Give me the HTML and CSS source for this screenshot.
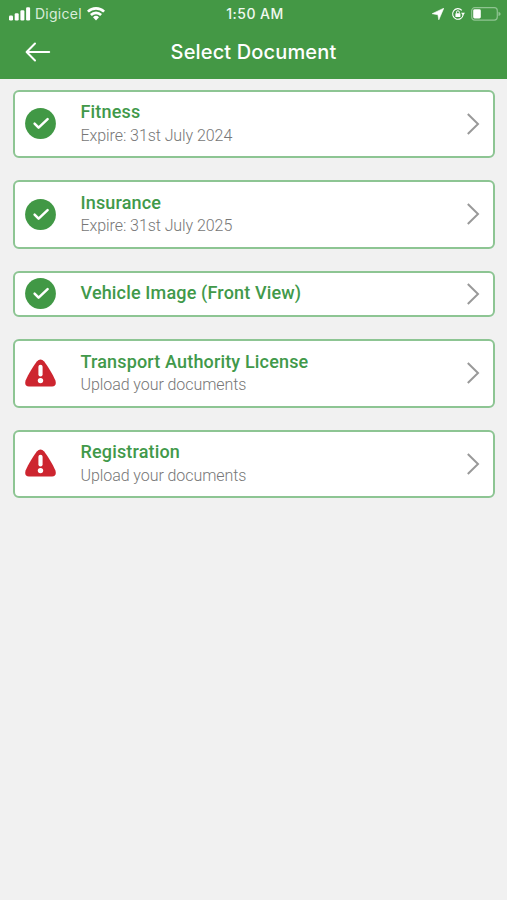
FILE: index.html
```html
<!DOCTYPE html>
<html lang="en">
<head>
<meta charset="utf-8">
<meta name="viewport" content="width=device-width, initial-scale=1">
<title>Select Document</title>
<link rel="stylesheet" href="styles.css">
</head>
<body>
<svg width="0" height="0" class="defs" aria-hidden="true">
  <symbol id="check" viewBox="0 0 31 31">
    <circle cx="15.5" cy="15.5" r="15.4" fill="#419845"/>
    <path d="M9.6 15.600l4 4.100 9-8.600" fill="none" stroke="#fff" stroke-width="2.500" stroke-linecap="round" stroke-linejoin="round"/>
  </symbol>
  <symbol id="alert" viewBox="0 0 31 31">
    <path d="M11.800 3.600Q15.500-.8 19.200 3.600C23.200 8.800 27.400 16 30.300 22.200Q32.200 28.200 27 28.400H4Q-1.200 28.200.7 22.200C3.600 16 7.800 8.800 11.800 3.600Z" fill="#cd252f"/>
    <path d="M15.500 8.800v7.700" stroke="#fff" stroke-width="4.200" stroke-linecap="round"/>
    <circle cx="15.500" cy="22.600" r="2.700" fill="#fff"/>
  </symbol>
  <symbol id="chevron" viewBox="0 0 14 24">
    <path d="M1.800 2l10.200 10L1.800 22" fill="none" stroke="#999" stroke-width="2"/>
  </symbol>
</svg>
<header>
  <div class="status">
    <div class="left">
      <svg class="signal" viewBox="0 0 22 14"><g fill="#fff"><rect y="8.500" width="4" height="5" rx="1.200"/><rect x="5.700" y="6.300" width="4" height="7.200" rx="1.200"/><rect x="11.400" y="3.200" width="4" height="10.300" rx="1.200"/><rect x="17.100" y=".3" width="4" height="13.200" rx="1.200"/></g></svg>
      <span class="carrier">Digicel</span>
      <svg class="wifi" viewBox="0 0 18 14" fill="none" stroke="#fff" stroke-width="2.600"><path d="M.9 4.700a11.500 11.500 0 0 1 16.200 0M3.900 8a7.200 7.200 0 0 1 10.200 0"/><path d="M6 10.300a4.300 4.300 0 0 1 6 0l-3 3.100Z" fill="#fff" stroke="none"/></svg>
    </div>
    <time>1:50 AM</time>
    <div class="right">
      <svg class="location" viewBox="0 0 12 12"><path d="M11.800.2L6.800 11.800 5.900 6.700.2 5.700Z" fill="#fff" stroke="#fff" stroke-width=".6" stroke-linejoin="round"/></svg>
      <svg class="lock" viewBox="0 0 14 14"><path d="M12.200 7.500a5.300 5.300 0 1 1-1.400-4.200" fill="none" stroke="#fff" stroke-width="1.100"/><path d="M10 5.800h4l-2 2.700Z" fill="#fff"/><rect x="4.400" y="6.200" width="5" height="3.800" rx=".6" fill="#fff"/><path d="M5.500 6.400V5.200a1.400 1.400 0 0 1 2.800 0v1.200" fill="none" stroke="#fff"/></svg>
      <svg class="battery" viewBox="0 0 30 14"><rect x=".7" y=".7" width="25.600" height="12.400" rx="3" fill="none" stroke="#8fc491" stroke-width="1.200"/><rect x="2.200" y="2.300" width="7.600" height="9.200" rx="1.400" fill="#fff"/><path d="M27.500 4.700q2.200.7 2.200 2.200t-2.200 2.200Z" fill="#8fc491"/></svg>
    </div>
  </div>
  <div class="nav">
    <svg class="back" viewBox="0 0 26 20"><path d="M24.200 10H2M10 1.500L1.600 10l8.400 8.500" fill="none" stroke="#fff" stroke-width="2" stroke-linecap="round" stroke-linejoin="round"/></svg>
    <h1>Select Document</h1>
  </div>
</header>
<main>
  <article class="card"><svg class="state"><use href="#check"/></svg><div class="text"><h2>Fitness</h2><p>Expire: 31st July 2024</p></div><svg class="chevron"><use href="#chevron"/></svg></article>
  <article class="card"><svg class="state"><use href="#check"/></svg><div class="text"><h2>Insurance</h2><p>Expire: 31st July 2025</p></div><svg class="chevron"><use href="#chevron"/></svg></article>
  <article class="card short"><svg class="state"><use href="#check"/></svg><div class="text"><h2>Vehicle Image (Front View)</h2></div><svg class="chevron"><use href="#chevron"/></svg></article>
  <article class="card"><svg class="state"><use href="#alert"/></svg><div class="text"><h2>Transport Authority License</h2><p>Upload your documents</p></div><svg class="chevron"><use href="#chevron"/></svg></article>
  <article class="card"><svg class="state"><use href="#alert"/></svg><div class="text"><h2>Registration</h2><p>Upload your documents</p></div><svg class="chevron"><use href="#chevron"/></svg></article>
</main>
</body>
</html>
```
FILE: styles.css
```css
* { box-sizing: border-box; margin: 0; }
body { min-height: 900px; background: #f1f1f1; font-family: Roboto, "Liberation Sans", sans-serif; }
svg { display: block; flex: none; }
.defs { display: none; }
header { height: 79px; background: #449845; color: #fff; }
.status { display: grid; grid-template-columns: 1fr auto 1fr; height: 27px; align-items: center; padding: 0 6px 0 9px; font-family: Inter, sans-serif; }
.left, .right { display: flex; align-items: center; }
.right { justify-content: flex-end; }
.signal { width: 22px; height: 14px; }
.carrier { margin: 0 5px 0 4px; font-size: 14px; line-height: 20px; letter-spacing: .25px; color: #d9edda; }
.wifi { width: 18px; height: 14px; }
time { font-size: 14px; font-weight: 500; letter-spacing: .45px; color: #f0f8f0; }
.location { width: 12px; height: 12px; }
.lock { width: 14px; height: 14px; margin: 0 6px 0 7px; }
.battery { width: 30px; height: 14px; }
.nav { display: grid; grid-template-columns: 26px 1fr 26px; height: 50px; align-items: center; padding: 0 25px; }
.back { width: 26px; height: 20px; }
h1 { text-align: center; font-family: Inter, sans-serif; font-size: 20px; font-weight: 550; letter-spacing: .15px; line-height: 24px; white-space: nowrap; }
main { display: flex; flex-direction: column; gap: 22px; padding: 10.700px 12px 0 13px; }
.card { display: flex; align-items: center; height: 68.500px; padding: 0 13px 0 10px; border: 2px solid #8dc593; border-radius: 6px; background: #fff; }
.short { height: 46.500px; }
.state { width: 31px; height: 31px; }
.text { flex: 1; margin-left: 24.500px; padding-bottom: 1.200px; }
.short .text { padding-bottom: 2px; }
h2 { color: #41994a; font-size: 18px; font-weight: 500; line-height: 23.500px; letter-spacing: .16px; white-space: nowrap; }
p { color: #777; font-size: 16px; font-weight: 300; line-height: 23px; letter-spacing: -.07px; white-space: nowrap; }
.chevron { width: 14px; height: 24px; }
```
